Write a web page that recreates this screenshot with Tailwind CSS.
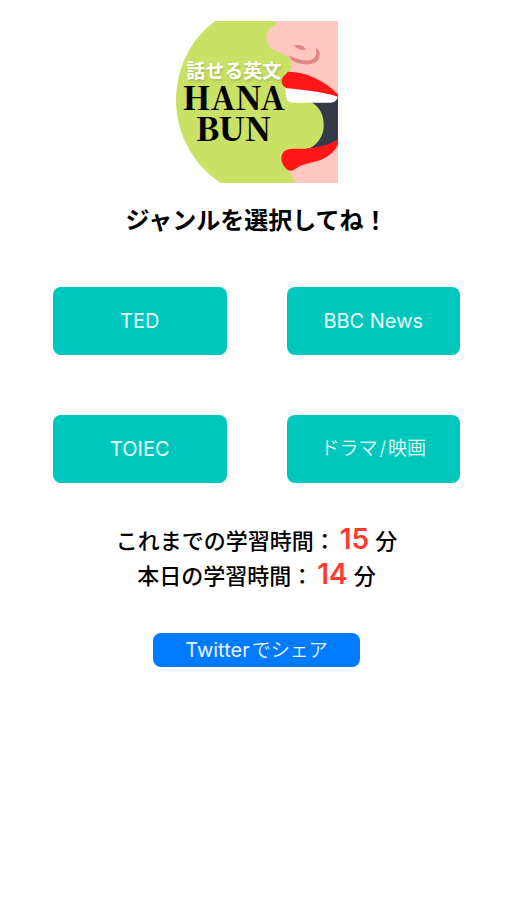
<!DOCTYPE html>
<html lang="ja">
<head>
<meta charset="utf-8">
<meta name="viewport" content="width=device-width, initial-scale=1">
<title>HANABUN</title>
<script src="https://cdn.jsdelivr.net/npm/@tailwindcss/browser@4"></script>
</head>
<body class="bg-white text-black font-['Inter','Noto_Sans_CJK_JP',sans-serif]">
<main class="flex min-h-screen flex-col items-center pt-[21px] pl-[6px]">
  <svg class="size-[162px]" viewBox="30 33 486 486" role="img" aria-label="話せる英文 HANABUN">
    <path fill="#c9e265" d="M148 33H516V519H165C86 470 30 374 30 272C30 174 75 85 148 33Z"/>
    <path fill="#ffc7c0" d="M328 33H516V519H385C384 502 378 491 366 480L350 205L376 178C378 160 374 143 361 135C338 125 312 120 304 98C296 73 306 55 325 48Q330 42 328 33Z"/>
    <path fill="#c9e265" d="M340 210H358L362 272L390 278H440L480 340L440 412L385 416L350 460L340 420Z"/>
    <path fill="#343a48" d="M430 276L516 252V400L425 422Z"/>
    <path fill="#c9e265" d="M385 277H436C462 291 475 319 473 350C472 378 456 401 431 415L385 418L350 340Z"/>
    <path fill="#fff" d="M358 231L516 256C514 269 508 277 495 278H380C363 278 359 268 358 231Z"/>
    <path fill="#ff1717" d="M365 185C416 184 477 211 516 253V260C462 244 413 240 362 235C344 225 343 208 354 197Q362 191 365 185Z"/>
    <path fill="#ff1717" d="M516 388V404C503 430 480 445 451 454C427 461 405 464 391 475C380 484 368 484 360 476C342 457 342 433 357 422C368 414 390 417 416 416C455 412 490 406 516 388Z"/>
    <path fill="#e08785" d="M384 108C398 101 414 107 420 119Q402 124 384 108Z"/>
    <path fill="#e08785" d="M449 114C461 116 465 134 458 148C445 171 399 165 377 151Q374 141 365 136C387 144 408 154 430 151C451 147 454 130 449 114Z"/>
    <text class="font-['Noto_Sans_CJK_JP',sans-serif] font-bold text-shadow-[1px_2px_3px_#a5ba52]" font-size="57" text-anchor="middle" x="203" y="205" fill="#fff">話せる英文</text>
    <g class="font-['Noto_Serif_CJK_JP','Liberation_Serif',serif] font-black" font-size="97" text-anchor="middle" fill="#000">
      <text x="203" y="300">HANA</text>
      <text x="203" y="394">BUN</text>
    </g>
  </svg>

  <h1 class="mt-5 text-[24px] leading-[36px] font-bold">ジャンルを選択してね！</h1>

  <div class="mt-[48px] grid w-full grid-cols-2 gap-[60px] px-[47px] text-[20px] text-[#e5fffc]">
    <button type="button" class="h-[68px] rounded-lg bg-[#00c7be]">TED</button>
    <button type="button" class="h-[68px] rounded-lg bg-[#00c7be]">BBC News</button>
    <button type="button" class="h-[68px] rounded-lg bg-[#00c7be]">TOIEC</button>
    <button type="button" class="h-[68px] rounded-lg bg-[#00c7be] text-[19px] font-[350]">ドラマ<span class="mx-0.5">/</span>映画</button>
  </div>

  <div class="mt-[39px] text-center text-[22px] font-medium">
    <p class="flex h-[35px] items-baseline justify-center leading-[35px]">これまでの学習時間：<span class="mr-1.5 ml-1 text-[28px] leading-[35px] font-semibold text-[#ff3b30]">15</span>分</p>
    <p class="flex h-[35px] items-baseline justify-center leading-[35px]">本日の学習時間：<span class="mr-1.5 ml-1 text-[28px] leading-[35px] font-semibold text-[#ff3b30]">14</span>分</p>
  </div>

  <button type="button" class="mt-[41px] h-[34px] w-[207px] rounded-lg bg-[#007aff] text-[20px] text-[#e8f3ff]">Twitter<span class="ml-0.5 text-[19px] font-[350]">でシェア</span></button>
</main>
</body>
</html>
